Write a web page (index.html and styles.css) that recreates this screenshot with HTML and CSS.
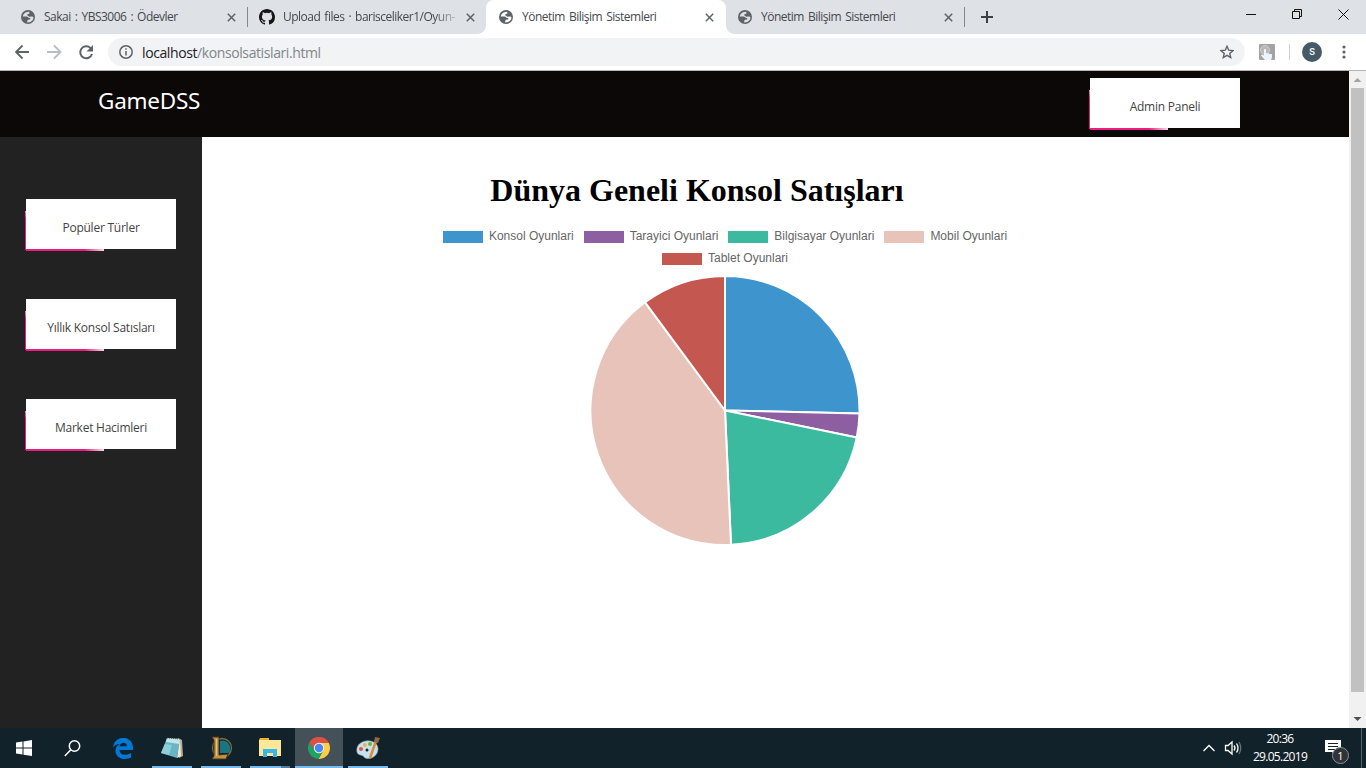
FILE: index.html
```html
<!DOCTYPE html>
<html lang="tr">
<head>
<meta charset="utf-8">
<title>Yönetim Bilişim Sistemleri</title>
<link rel="stylesheet" href="styles.css">
</head>
<body>
<svg class="defs" width="0" height="0">
  <symbol id="globe" viewBox="0 0 14 14"><circle cx="7" cy="7" r="7" fill="#5f6368"/><path d="M8.200 1.700Q4 1.600 2.300 4.700L1.700 6.500l4.300.1 2 1.300 1.300 0-.2 1.700-2.200.2-.6 1-.1 1.700Q10 12.700 12.200 9.300L12.400 7 11 6.600 8.300 6.700 6.200 5.300 6.600 4.100 8.400 3.700Z" fill="currentColor"/></symbol>
  <symbol id="close" viewBox="0 0 9 9"><path d="M.8.8l7.400 7.400M8.200.8L.8 8.200" stroke="#5f6368" stroke-width="1.500"/></symbol>
</svg>
<div class="tabs">
  <div class="tab divided"><svg class="fav"><use href="#globe"/></svg><span class="title">Sakai : YBS3006 : Ödevler</span><svg class="x"><use href="#close"/></svg></div>
  <div class="tab second"><svg class="fav git" viewBox="0 0 16 16"><path fill="#161616" d="M8 0C3.580 0 0 3.580 0 8c0 3.540 2.290 6.530 5.470 7.590.4.070.55-.17.55-.38v-1.490c-2.010.37-2.530-.49-2.690-.94-.09-.23-.48-.94-.82-1.130-.28-.15-.68-.52-.01-.53.630-.01 1.080.58 1.230.82.720 1.210 1.870.87 2.330.66.070-.52.280-.87.510-1.070-1.780-.2-3.640-.89-3.640-3.950 0-.87.310-1.590.82-2.150-.08-.2-.36-1.020.08-2.120 0 0 .67-.21 2.200.82a7.600 7.600 0 0 1 4 0c1.530-1.040 2.200-.82 2.200-.82.440 1.100.160 1.920.080 2.120.510.560.82 1.270.82 2.150 0 3.070-1.870 3.750-3.650 3.950.290.250.540.730.540 1.480v2.200c0 .21.150.46.550.38A8 8 0 0 0 16 8c0-4.420-3.580-8-8-8Z"/></svg><span class="title fade">Upload files · barisceliker1/Oyun-</span><svg class="x"><use href="#close"/></svg></div>
  <div class="tab active"><svg class="fav"><use href="#globe"/></svg><span class="title">Yönetim Bilişim Sistemleri</span><svg class="x"><use href="#close"/></svg></div>
  <div class="tab last divided"><svg class="fav"><use href="#globe"/></svg><span class="title">Yönetim Bilişim Sistemleri</span><svg class="x"><use href="#close"/></svg></div>
  <svg class="plus" viewBox="0 0 12 12"><path d="M6 0v12M0 6h12" stroke="#3c4043" stroke-width="2"/></svg>
  <svg class="window-buttons" width="120" height="34" viewBox="0 0 120 34" fill="none" stroke="#111"><path d="M0 14.500h10M46.500 11.500h7v7h-7zM48.500 11v-1.500h7v7H54M92.500 9.500l10 10M102.500 9.500l-10 10"/></svg>
</div>
<div class="toolbar">
  <svg class="nav" width="84" height="36" viewBox="0 0 84 36" fill="none" stroke-width="1.900"><path d="M14 18H1.500M7.500 11.500L1 18l6.500 6.500" stroke="#5f6368"/><path d="M32 18h13M39 11.500l6.500 6.500-6.500 6.500" stroke="#bbbdbf"/><path d="M75.500 14A6 6 0 1 0 77 20" stroke="#5f6368" stroke-width="2"/><path d="M78 11v6.500h-6.500z" fill="#5f6368"/></svg>
  <div class="address">
    <svg width="14" height="14" viewBox="0 0 14 14"><circle cx="7" cy="7" r="6.200" fill="none" stroke="#5f6368" stroke-width="1.500"/><path d="M7 6v4.500M7 3.300v1.500" stroke="#5f6368" stroke-width="1.500"/></svg>
    <span class="url"><b>localhost</b>/konsolsatislari.html</span>
    <svg class="star" width="14" height="14" viewBox="0 0 14 14"><path d="M7 1.300l1.700 3.900 4.300.4-3.250 2.800 1 4.200L7 10.400l-3.750 2.200 1-4.200L1 5.600l4.300-.4z" fill="none" stroke="#5f6368" stroke-width="1.400"/></svg>
  </div>
  <svg class="ext" width="16" height="16" viewBox="0 0 16 16"><rect width="16" height="16" rx="1" fill="#a3a3a3"/><circle cx="6" cy="6" r="4.500" fill="#b9b9b9" stroke="#cfcfcf"/><path d="M5 5.500q1-1 2 0V9l6 1.200V13l-1 3H6l-4-4.600 1-1 2 1z" fill="#eef4ff"/></svg>
  <i class="rule"></i>
  <span class="avatar">s</span>
  <svg width="4" height="14" viewBox="0 0 4 14" fill="#5f6368"><circle cx="2" cy="2" r="1.600"/><circle cx="2" cy="7" r="1.600"/><circle cx="2" cy="12" r="1.600"/></svg>
</div>
<div class="viewport">
  <div class="page">
    <header class="header"><span class="brand">GameDSS</span><a class="btn">Admin Paneli</a></header>
    <div class="body">
      <nav class="sidebar"><a class="btn">Popüler Türler</a><a class="btn">Yıllık Konsol Satısları</a><a class="btn">Market Hacimleri</a></nav>
      <main class="main">
        <h1>Dünya Geneli Konsol Satışları</h1>
        <div class="chart">
          <div class="legend"><span class="key blue">Konsol Oyunlari</span><span class="key purple">Tarayici Oyunlari</span><span class="key green">Bilgisayar Oyunlari</span><span class="key pink">Mobil Oyunlari</span></div>
          <div class="legend"><span class="key red">Tablet Oyunlari</span></div>
          <svg class="pie" width="270" height="270" viewBox="-135 -135.500 270 270" stroke="#fff" stroke-width="2" stroke-linejoin="round">
            <path fill="#3e95cd" d="M0 0V-134.500A134.500 134.500 0 0 1 134.470 3Z"/>
            <path fill="#8e5ea2" d="M0 0L134.470 3A134.500 134.500 0 0 1 131.750 27Z"/>
            <path fill="#3cba9f" d="M0 0L131.750 27A134.500 134.500 0 0 1 6 134.370Z"/>
            <path fill="#e8c3b9" d="M0 0L6 134.370A134.500 134.500 0 0 1-79.900-108.200Z"/>
            <path fill="#c45850" d="M0 0L-79.900-108.200A134.500 134.500 0 0 1 0-134.500Z"/>
          </svg>
        </div>
      </main>
    </div>
  </div>
  <div class="scroll"><svg width="17" height="17"><path d="M4.500 11L8.500 7l4 4z" fill="#a3a3a3"/></svg><i class="thumb"></i><svg width="17" height="17"><path d="M4.500 6h8l-4 4z" fill="#505050"/></svg></div>
</div>
<div class="taskbar">
  <div class="task"><svg width="16" height="16" fill="#fff"><path d="M0 2.500l6.500-1v6H0zM7.500 1.400L16 0v7.500H7.500zM0 8.500h6.500v6L0 13.600zM7.500 8.500H16V16l-8.500-1.300z"/></svg></div>
  <div class="task search"><svg width="17" height="17" fill="none" stroke="#fff" stroke-width="1.500"><circle cx="10.500" cy="6" r="5.200"/><path d="M6.800 9.700L.8 16"/></svg></div>
  <div class="task"><svg width="20" height="21" viewBox="0 0 20 21"><path fill="#0078d7" d="M0 9.500C1-3 19.500-3.500 20 9.500V12H6.500c.5 6 7.500 5.500 11.500 3v4.500C11 23 2 20 2.500 12 2.700 9 4.500 7 7 6 3.500 6 1.500 7.500 0 9.500zM6.600 8.300h7.300C14 3.500 7.300 3.500 6.600 8.300z"/></svg></div>
  <div class="task open"><svg width="24" height="24" viewBox="0 0 24 24"><path d="M18 2l4 2 1 16-4 2z" fill="#b9ab91"/><path d="M7 2l13 1-3 19L1 17z" fill="#68b5c4"/><path d="M7 2l13 1-1 5-13-2z" fill="#c3e5e7"/><path d="M5 8l7 1-3 10-8-2z" fill="#8bd0d9"/><path d="M17 22l3-19 1 17z" fill="#eee9d8"/><path d="M7 2l13 1" stroke="#555" stroke-dasharray="1 1"/></svg></div>
  <div class="task open"><svg width="24" height="24" viewBox="0 0 24 24"><circle cx="13" cy="12" r="9.500" fill="#0b2632" stroke="#826b3c" stroke-width="1.300"/><path d="M11 5a8 8 0 0 1 9 12h-9z" fill="#1b7580"/><path d="M3 1h7v18l9-1-2 5H3l2-3V4z" fill="#c09347" stroke="#49321a"/><path d="M7.500 3v17" stroke="#e5c57d"/></svg></div>
  <div class="task open stacked"><svg width="22" height="20" viewBox="0 0 22 20"><path d="M0 2h1V1h8l1 1h12v16H0z" fill="#ffe79a"/><path d="M0 2h10V0H1z" fill="#e9b72d"/><path d="M4 19v-8h14v8h-4v-4H8v4z" fill="#35b6ed"/></svg></div>
  <div class="task open current"><svg width="22" height="22" viewBox="-11 -11 22 22"><path d="M0 0L-9.530-5.500A11 11 0 0 1 9.530-5.500Z" fill="#dd5144"/><path d="M0-5H9.800A11 11 0 0 1-.5 11L4.330 2.500Z" fill="#ffcd46"/><path d="M-4.330 2.500L-9.530-5.500A11 11 0 0 0-.5 11L4.330 2.500Z" fill="#1da462"/><path d="M0-5H9.800A11 11 0 0 0-9.530-5.500L-4.330 2.500Z" fill="#dd5144"/><circle r="5.200" fill="#f1f1f1"/><circle r="4.200" fill="#4688f1"/></svg></div>
  <div class="task open"><svg width="24" height="24" viewBox="0 0 24 24"><path d="M10 5C3 6 0 11 1 16c1 4 5 2 7 5 4 4 14 0 14-8 0-5-5-9-12-8z" fill="#c7e1ef" stroke="#88aabd" stroke-width=".6"/><circle cx="5" cy="13" r="2" fill="#e35248"/><circle cx="9" cy="9" r="2" fill="#edb34b"/><circle cx="14" cy="8" r="2" fill="#65b546"/><circle cx="11" cy="14" r="1.500" fill="#17272f"/><path d="M20 5l-6 17" stroke="#db8c36" stroke-width="2.500"/><path d="M18 6l1-5 5 1-2 5z" fill="#996642"/></svg></div>
  <div class="tray">
    <svg width="39" height="18" fill="none" stroke="#fff" stroke-width="1.300"><path d="M.5 12L6 6.500l5.500 5.500M22.500 6.500H25l4-3.500v12l-4-3.500h-2.500zM31 6.500q2 2.500 0 5M33.500 4.500q3 4.500 0 9"/><path d="M36 3q3.500 6 0 12" stroke="#65727a"/></svg>
    <div class="clock"><span>20:36</span><span>29.05.2019</span></div>
    <div class="notice"><svg width="17" height="16"><path d="M0 0h16v12h-5v4l-4-4H0z" fill="#fff"/><path d="M3 3.500h10M3 6.500h10M3 9.500h7" stroke="#12222b"/></svg><span class="badge">1</span></div>
  </div>
</div>
</body>
</html>
```
FILE: styles.css
```css
* { box-sizing: border-box; }
body { margin: 0; width: 1366px; height: 768px; overflow: hidden; display: flex; flex-direction: column; background: #fff; font-family: "Open Sans", sans-serif; }
svg { display: block; flex: none; }
.defs { position: absolute; }
.tabs { height: 34px; background: #dee1e6; display: flex; align-items: center; padding-left: 8px; flex: none; }
.tab { width: 240px; height: 34px; padding: 0 10px 0 13px; display: flex; align-items: center; flex: none; }
.tab.second { width: 238px; padding-left: 12px; }
.tab.last { width: 239px; padding-left: 12px; }
.tab.active { background: #fff; border-radius: 8px 8px 0 0; position: relative; }
.tab.active::before, .tab.active::after { content: ""; position: absolute; bottom: 0; width: 8px; height: 8px; }
.tab.active::before { left: -8px; background: radial-gradient(circle at 0 0, transparent 7.5px, #fff 8px); }
.tab.active::after { right: -8px; background: radial-gradient(circle at 100% 0, transparent 7.5px, #fff 8px); }
.divided { background: linear-gradient(#85888d, #85888d) 100% 50% / 1px 20px no-repeat; }
.fav { width: 14px; height: 14px; margin-right: 9px; color: #dee1e6; }
.active .fav { color: #fff; }
.git { width: 16px; height: 16px; margin: 0 8px 0 -1px; }
.title { width: 175px; font-size: 12px; letter-spacing: -.5px; word-spacing: 1.4px; line-height: 20px; color: #45494d; white-space: nowrap; overflow: hidden; flex: none; }
.fade { -webkit-mask-image: linear-gradient(90deg, #000 150px, transparent 180px); }
.x { width: 9px; height: 9px; margin-left: 8px; }
.plus { width: 12px; height: 12px; margin-left: 16px; }
.window-buttons { margin-left: auto; }
.toolbar { height: 37px; border-bottom: 1px solid #b6b4b6; display: flex; align-items: center; flex: none; padding-left: 15px; }
.nav { margin-right: 9px; }
.address { width: 1137px; height: 28px; border-radius: 14px; background: #f1f3f4; display: flex; align-items: center; padding: 0 11px; }
.url { font-size: 14px; letter-spacing: -.4px; margin-left: 9px; color: #80868b; }
.url b { font-weight: 400; color: #202124; }
.star { margin-left: auto; }
.ext { margin-left: 14px; }
.rule { height: 16px; width: 1px; background: #cfd1d4; margin: 0 12px 0 14px; }
.avatar { width: 20px; height: 20px; border-radius: 50%; background: #455a64; color: #fff; font: 12px/19px Roboto, sans-serif; text-align: center; margin-right: 20px; }
.viewport { height: 657px; display: flex; flex: none; }
.page { width: 1349px; display: flex; flex-direction: column; }
.header { height: 66px; background: #0c0807; display: flex; justify-content: space-between; padding: 7px 109px 0 98px; flex: none; }
.brand { color: #fff; font: 22.5px/45px "Noto Sans", sans-serif; letter-spacing: -.25px; }
.body { display: flex; flex: 1; }
.sidebar { width: 202px; background: #222; padding: 62px 26px 0; display: flex; flex-direction: column; gap: 50px; }
.btn { position: relative; display: block; width: 150px; height: 50px; background: #fff; text-align: center; font-size: 12px; letter-spacing: -.24px; line-height: 57px; color: #444; white-space: nowrap; }
.btn::before { content: ""; position: absolute; left: -1px; top: 12px; width: 1px; height: 39px; background: linear-gradient(#f58abf, #ed1b82 20%); }
.btn::after { content: ""; position: absolute; left: 0; bottom: -2px; width: 78px; height: 2px; background: linear-gradient(90deg, #ed1b82 75%, #fbd5e7); }
.main { flex: 1; display: flex; flex-direction: column; align-items: center; }
h1 { font: bold 32px/36px "Liberation Serif", serif; margin: 35px 157px 0 0; color: #000; white-space: nowrap; }
.chart { width: 600px; margin: 17px 101px 0 0; display: flex; flex-direction: column; align-items: center; }
.legend { display: flex; gap: 10px; height: 22px; align-items: center; }
.key { display: flex; align-items: center; gap: 6px; font: 12px/14px "Liberation Sans", sans-serif; color: #666; white-space: nowrap; }
.key::before { content: ""; width: 40px; height: 12px; margin-top: 2px; background: var(--c); }
.blue { --c: #3e95cd; } .purple { --c: #8e5ea2; } .green { --c: #3cba9f; } .pink { --c: #e8c3b9; } .red { --c: #c45850; }
.pie { margin-top: 6px; }
.scroll { width: 17px; background: #f1f1f1; display: flex; flex-direction: column; }
.thumb { width: 13px; height: 604px; background: #c1c1c1; margin: 0 2px auto; }
.taskbar { height: 40px; flex: none; display: flex; background: #12222b; }
.task { width: 48px; height: 40px; margin-right: 1px; display: flex; align-items: center; justify-content: center; }
.search { width: 47px; margin-right: 3px; }
.open { background: linear-gradient(#76b9ed, #76b9ed) 50% 100% / 40px 2px no-repeat; }
.stacked { background: linear-gradient(90deg, #76b9ed 31px, #537d9d 31px) 50% 100% / 40px 2px no-repeat; }
.current { background: linear-gradient(#76b9ed, #76b9ed) 0 100% / 48px 2px no-repeat #455159; }
.tray { flex: 1; display: flex; justify-content: flex-end; align-items: center; padding-right: 14px; margin-right: 4px; border-right: 1px solid #53616a; }
.clock { width: 68px; display: flex; flex-direction: column; align-items: center; margin: 0 11px 0 4px; color: #fff; font-size: 12px; line-height: 18px; letter-spacing: -.7px; }
.notice { position: relative; width: 22px; height: 16px; }
.badge { position: absolute; left: 7px; top: 7px; width: 17px; height: 17px; border: 1px solid #88939a; border-radius: 50%; background: #303337; color: #fff; font-size: 11px; line-height: 15px; text-align: center; }
```
